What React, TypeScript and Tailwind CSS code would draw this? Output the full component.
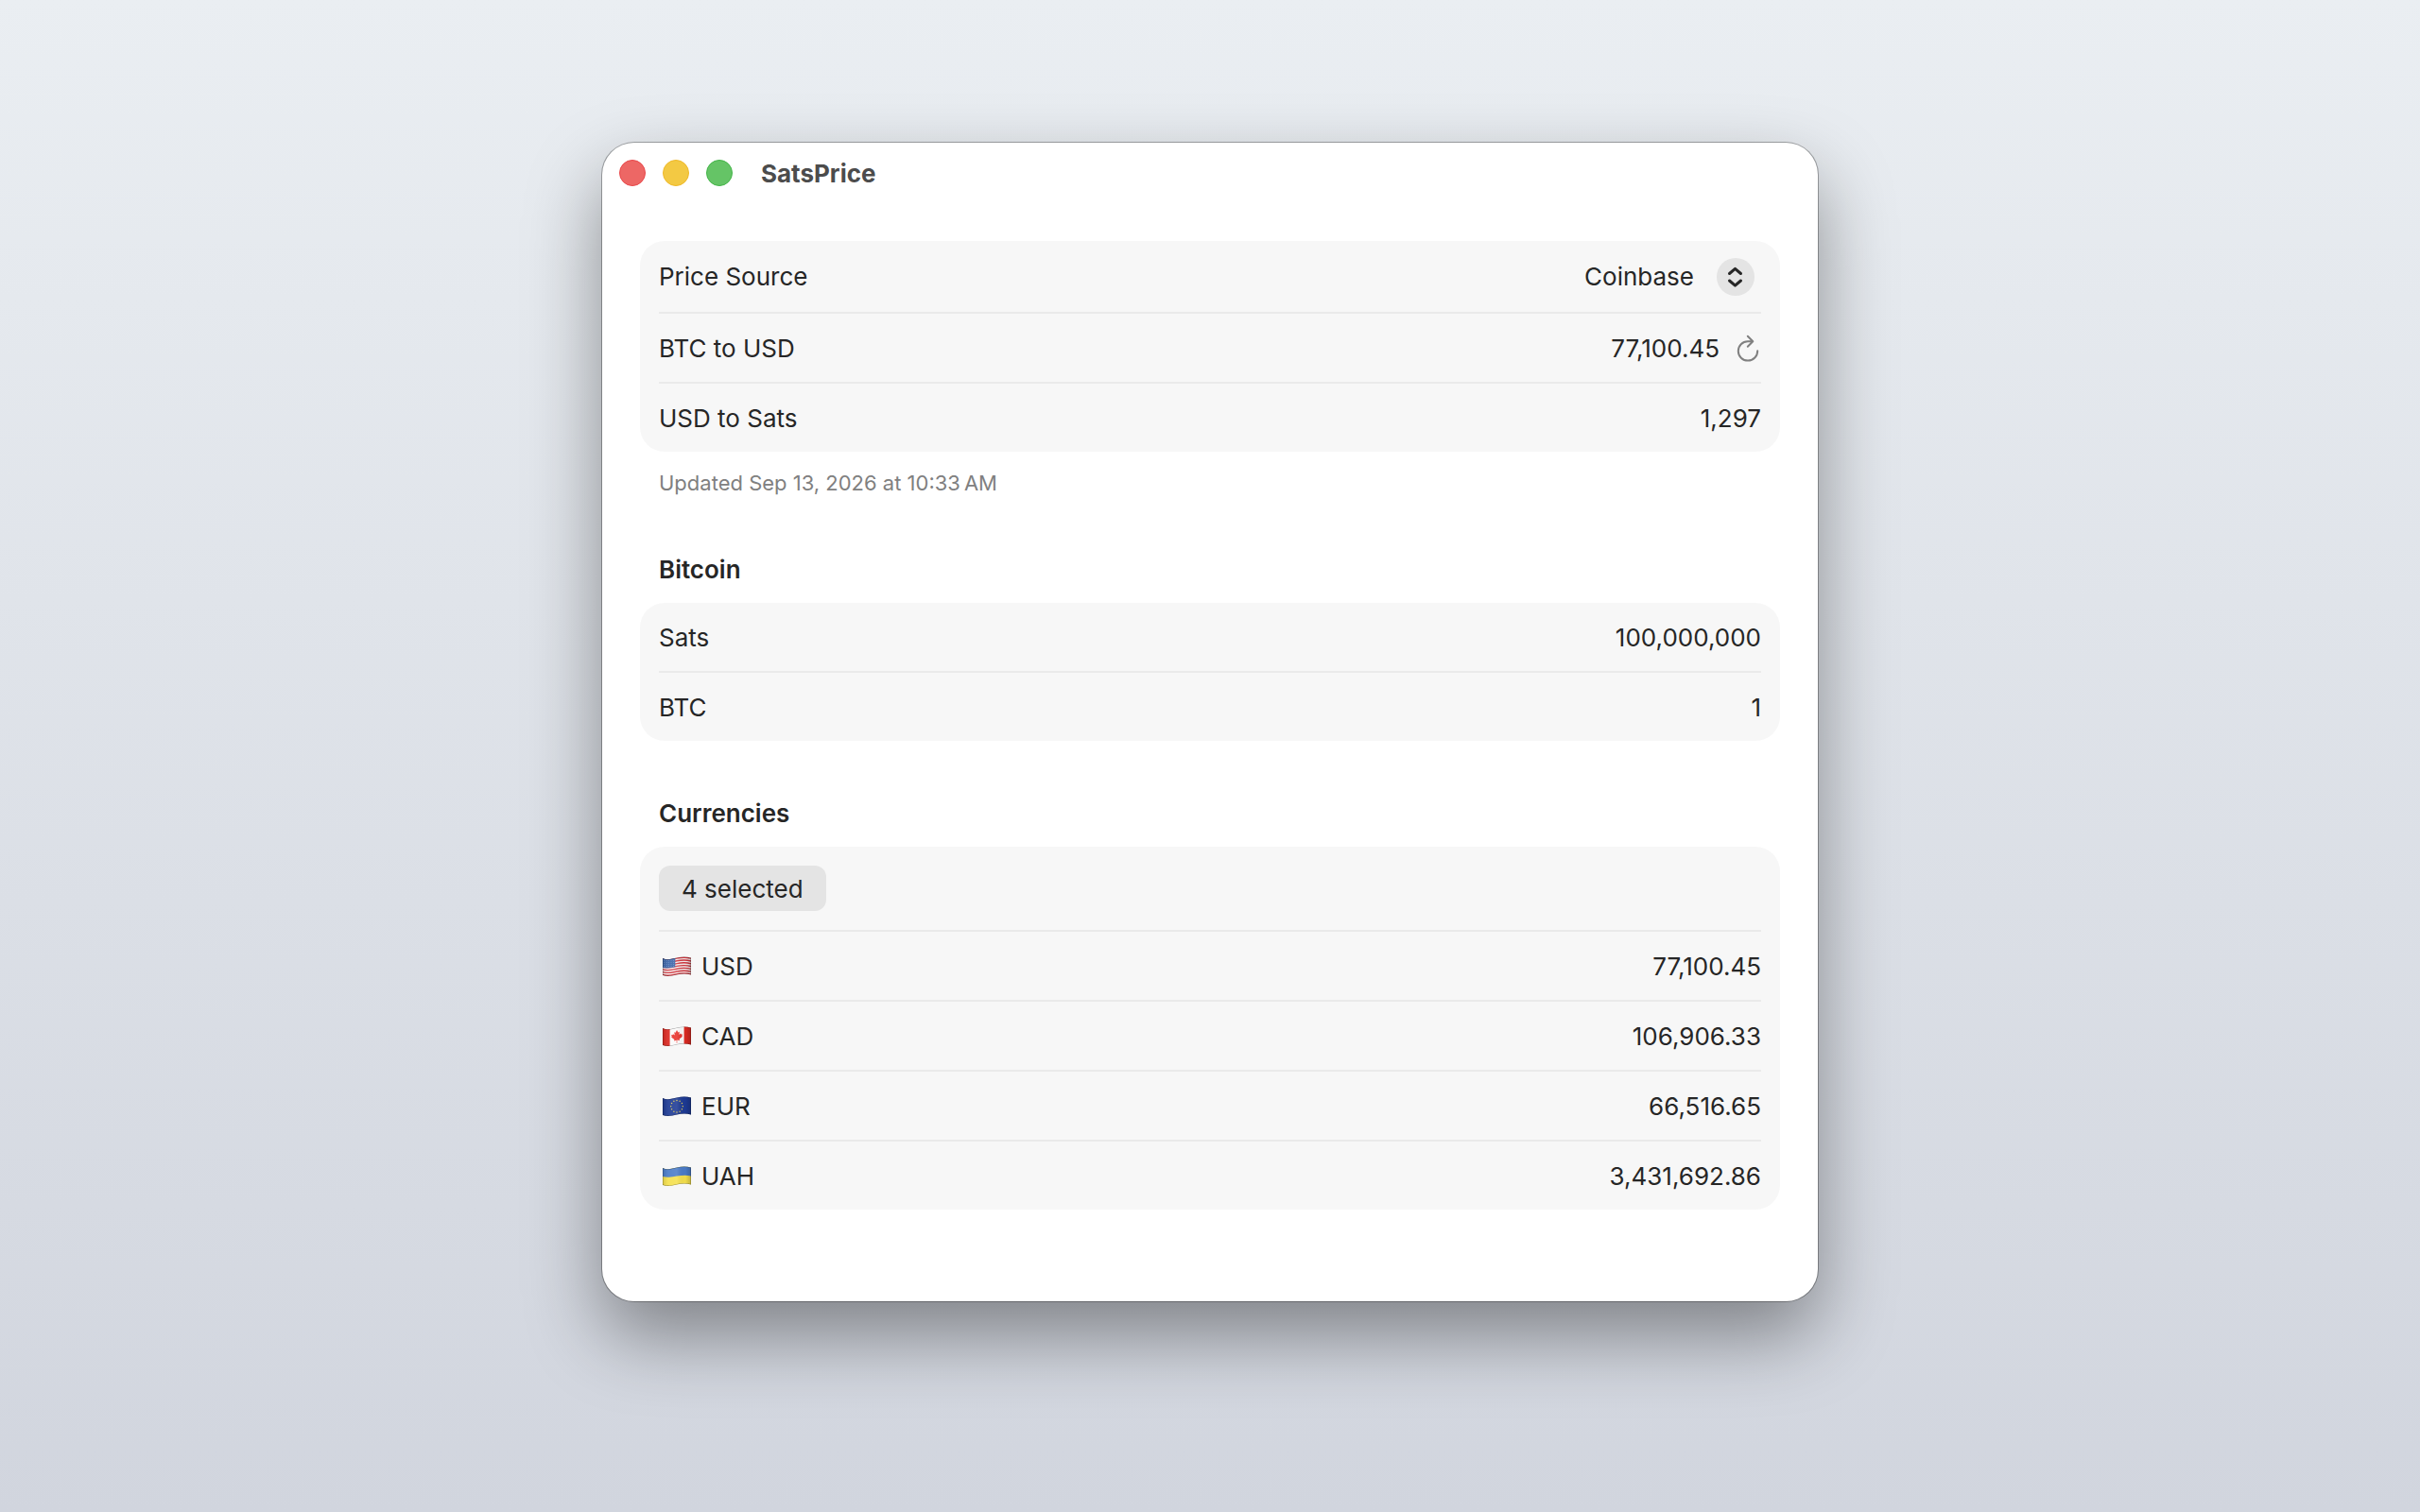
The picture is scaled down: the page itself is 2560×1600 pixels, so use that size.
import { ReactNode, useId } from "react";

const WAVE = "M0 2 C5 4.5 10 2.5 15 1.5 C20 0.3 25 0 30 1.5 V19.5 C25 18 20 18.3 15 19.5 C10 20.7 5 21.8 0 20 Z";

function Flag({ name, children }: { name: string; children: ReactNode }) {
  const id = useId();
  return (
    <svg viewBox="0 0 30 22" className="h-[22px] w-[30px] shrink-0" role="img" aria-label={name}>
      <defs>
        <clipPath id={id + "c"}>
          <path d={WAVE} />
        </clipPath>
        <linearGradient id={id + "g"} x1="0" x2="1" y1="0" y2="0">
          <stop offset="0" stopColor="#000" stopOpacity="0.12" />
          <stop offset="0.2" stopColor="#fff" stopOpacity="0.08" />
          <stop offset="0.5" stopColor="#fff" stopOpacity="0.12" />
          <stop offset="0.8" stopColor="#000" stopOpacity="0.02" />
          <stop offset="1" stopColor="#000" stopOpacity="0.2" />
        </linearGradient>
      </defs>
      <g clipPath={`url(#${id}c)`}>
        {children}
        <rect width="30" height="22" fill={`url(#${id}g)`} />
        <path d={WAVE} fill="none" stroke="#000" strokeOpacity="0.35" strokeWidth="1" />
      </g>
    </svg>
  );
}

function UsFlag() {
  return (
    <Flag name="United States">
      <rect width="30" height="22" fill="#f6efef" />
      {[0, 1, 2, 3, 4, 5, 6].map((i) => {
        const y = 2.6 + i * 2.8;
        return (
          <path
            key={i}
            d={`M0 ${y} C5 ${y + 2} 10 ${y + 0.4} 15 ${y - 0.6} C20 ${y - 1.6} 25 ${y - 1.8} 30 ${y - 0.4}`}
            fill="none"
            stroke="#d0343c"
            strokeWidth="1.4"
          />
        );
      })}
      <path d="M0 0 H13.3 V11.3 C9 12.2 5 13 0 12 Z" fill="#3b64a8" />
      {[0, 1, 2, 3].map((r) =>
        [0, 1, 2, 3, 4].map((c) => (
          <circle key={`${r}-${c}`} cx={1.8 + c * 2.4} cy={4.2 + r * 2.1} r="0.42" fill="#a9bfe2" />
        )),
      )}
    </Flag>
  );
}

function CaFlag() {
  return (
    <Flag name="Canada">
      <rect width="30" height="22" fill="#fbfafa" />
      <rect width="7.6" height="22" fill="#dc2a22" />
      <rect x="22.6" width="7.4" height="22" fill="#dc2a22" />
      <path
        d="M15 4 L16.4 6.5 L17.8 5.8 L17.3 9 L19 7.6 L19.4 8.6 L21 8.4 L20.3 10.2 L21 10.8 L17.6 13.6 L18 15 L15.3 14.6 V17.8 H14.7 V14.8 L12 15.4 L12.4 14 L9 11.6 L9.8 10.9 L9 9 L10.6 9.2 L11 8.2 L12.8 9.6 L12.2 6.2 L13.6 6.8 Z"
        fill="#e8302a"
      />
    </Flag>
  );
}

function EuFlag() {
  return (
    <Flag name="European Union">
      <rect width="30" height="22" fill="#1d3a94" />
      {Array.from({ length: 12 }, (_, i) => {
        const a = (i * Math.PI) / 6;
        return (
          <circle key={i} cx={15 + 6.3 * Math.sin(a)} cy={10.7 - 6.3 * Math.cos(a)} r="0.75" fill="#d9c452" />
        );
      })}
    </Flag>
  );
}

function UaFlag() {
  return (
    <Flag name="Ukraine">
      <rect width="30" height="22" fill="#f5e04c" />
      <path d="M0 0 H30 V10.4 C25 9.2 20 9.6 15 10.6 C10 11.8 5 12.4 0 11 Z" fill="#4a7bc8" />
    </Flag>
  );
}

function Group({ children }: { children: ReactNode }) {
  return (
    <div className="divide-y-2 divide-[#eaeaea] rounded-[26px] bg-[#f7f7f7] px-5">{children}</div>
  );
}

function Heading({ children }: { children: ReactNode }) {
  return <h2 className="mb-[19px] px-5 text-[26px] leading-8 font-semibold">{children}</h2>;
}

function Field({ id, label, value, flag }: { id: string; label: string; value: string; flag?: ReactNode }) {
  return (
    <div className="flex items-center">
      <label htmlFor={id} className="flex h-[72px] items-center gap-[11px] pt-[2px]">
        {flag && <span className="pl-1">{flag}</span>}
        {label}
      </label>
      <input
        id={id}
        type="text"
        defaultValue={value}
        className="h-[72px] min-w-0 flex-1 bg-transparent text-right outline-none"
      />
    </div>
  );
}

export default function App() {
  return (
    <div className="flex min-h-screen items-center justify-center bg-linear-to-b from-[#eaeef2] to-[#d1d5de] px-6 pb-[72px] font-['Inter',sans-serif] text-[26px] leading-8 text-[#262626]">
      <main className="w-full max-w-[1286px] rounded-[34px] bg-white pb-[97px] shadow-[0_0_0_1px_rgba(0,0,0,0.3),0_36px_80px_rgba(0,0,0,0.4)]">
        <header className="flex h-16 items-center gap-[18px] px-[18px]">
          <button aria-label="Close" className="size-7 rounded-full border border-[#e9484a] bg-[#ed6765]" />
          <button aria-label="Minimize" className="size-7 rounded-full border border-[#efb92a] bg-[#f3c943]" />
          <button aria-label="Zoom" className="size-7 rounded-full border border-[#44b549] bg-[#65c466]" />
          <h1 className="ml-3 pt-[2px] font-bold text-[#4c4c4c]">SatsPrice</h1>
        </header>

        <div className="flex flex-col gap-[61px] px-10 pt-10">
          <section>
            <Group>
              <div className="flex h-[77px] items-center justify-between">
                <label htmlFor="source">Price Source</label>
                <div className="relative mr-[7px] flex items-center">
                  <select
                    id="source"
                    className="field-sizing-content h-10 cursor-pointer appearance-none bg-transparent pr-16 outline-none"
                  >
                    <option>Coinbase</option>
                  </select>
                  <span className="pointer-events-none absolute right-0 flex size-10 items-center justify-center rounded-full bg-[#e4e4e4]">
                    <svg
                      viewBox="0 0 40 40"
                      className="size-10"
                      fill="none"
                      stroke="#262626"
                      strokeWidth="3"
                      strokeLinecap="round"
                      strokeLinejoin="round"
                    >
                      <path d="M13.5 16.5 L19.5 11.3 L25.5 16.5 M13.5 24 L19.5 29.2 L25.5 24" />
                    </svg>
                  </span>
                </div>
              </div>
              <div className="flex h-[74px] items-center justify-between pt-[2px]">
                <span>BTC to USD</span>
                <div className="flex items-center gap-[18px]">
                  <output>77,100.45</output>
                  <button aria-label="Refresh" className="h-[30px] w-[26px]">
                    <svg
                      viewBox="0 0 26 30"
                      className="h-[30px] w-[26px]"
                      fill="none"
                      stroke="#808080"
                      strokeWidth="2"
                      strokeLinecap="round"
                      strokeLinejoin="round"
                    >
                      <path d="M17 7.2 H12 A10.2 10.2 0 1 0 22.2 17.2 M11.8 1.8 L17.3 7.3 L11.8 12.8" />
                    </svg>
                  </button>
                </div>
              </div>
              <div className="flex h-[72px] items-center justify-between pt-[2px]">
                <span>USD to Sats</span>
                <output>1,297</output>
              </div>
            </Group>
            <p className="mt-[19px] px-5 text-[22px] leading-[29px] text-[#808080]">
              Updated Sep 13, 2026 at 10:33{"\u202f"}AM
            </p>
          </section>

          <section>
            <Heading>Bitcoin</Heading>
            <Group>
              <Field id="sats" label="Sats" value="100,000,000" />
              <Field id="btc" label="BTC" value="1" />
            </Group>
          </section>

          <section>
            <Heading>Currencies</Heading>
            <Group>
              <div className="py-5">
                <button className="block h-12 rounded-xl bg-[#e4e4e4] px-6 pt-[2px]">4 selected</button>
              </div>
              <Field id="usd" label="USD" value="77,100.45" flag={<UsFlag />} />
              <Field id="cad" label="CAD" value="106,906.33" flag={<CaFlag />} />
              <Field id="eur" label="EUR" value="66,516.65" flag={<EuFlag />} />
              <Field id="uah" label="UAH" value="3,431,692.86" flag={<UaFlag />} />
            </Group>
          </section>
        </div>
      </main>
    </div>
  );
}
